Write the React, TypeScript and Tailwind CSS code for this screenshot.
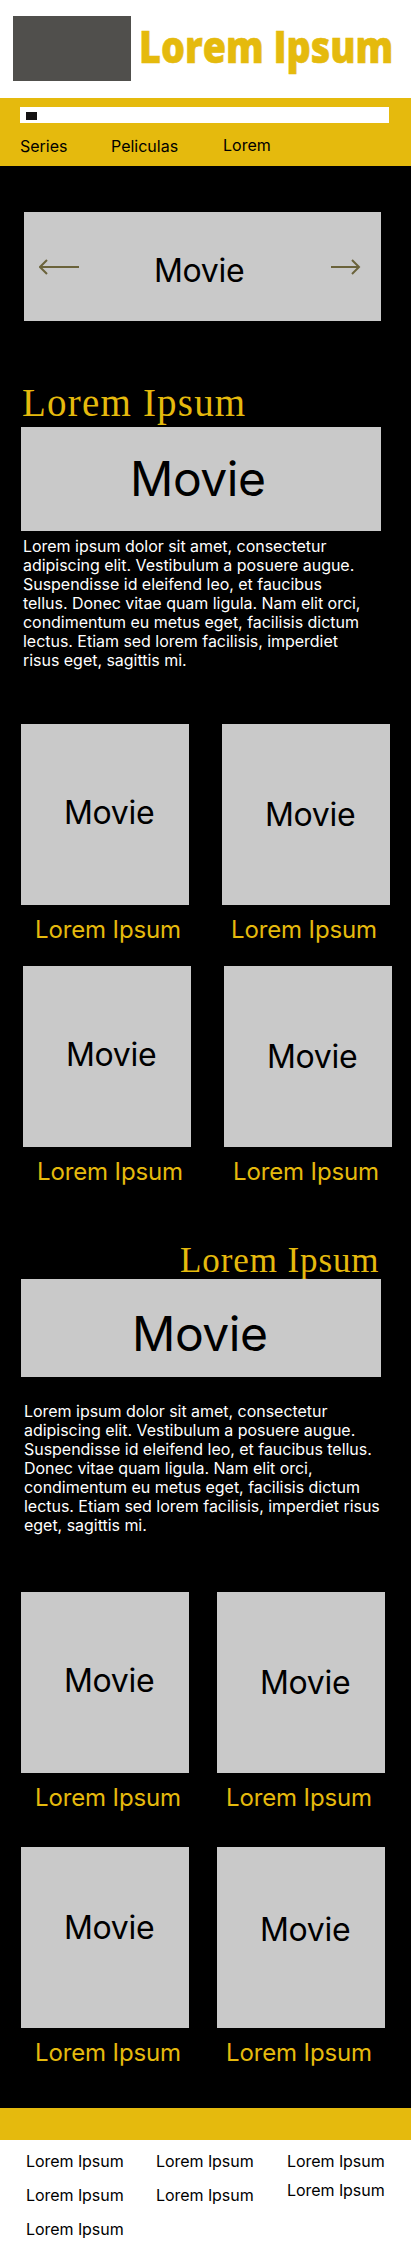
type CardProps = { labelClass: string; captionClass: string };

function Card({ labelClass, captionClass }: CardProps) {
  return (
    <article className="w-[168px]">
      <div className={`h-[181px] bg-[#c9c9c9] text-[32px] leading-[39px] tracking-[-0.3px] text-black ${labelClass}`}>Movie</div>
      <h3 className={`mt-[10px] whitespace-nowrap text-2xl leading-[29px] tracking-[-0.13px] text-[#e5ba0d] ${captionClass}`}>Lorem Ipsum</h3>
    </article>
  );
}

function CardRow({ className, low = true }: { className: string; low?: boolean }) {
  return (
    <div className={`flex h-[220px] ${className}`}>
      <Card labelClass={low ? "pl-[43px] pt-[69px]" : "pl-[43px] pt-[61px]"} captionClass="pl-[14px]" />
      <Card labelClass={low ? "pl-[43px] pt-[71px]" : "pl-[43px] pt-[63px]"} captionClass="pl-[9px]" />
    </div>
  );
}

function Header() {
  return (
    <header>
      <div className="flex h-[98px] bg-white pl-[13px] pt-4">
        <div className="h-[65px] w-[118px] shrink-0 bg-[#504f4c]" />
        <h1 className="ml-2 h-[60px] origin-left scale-x-[0.857] whitespace-nowrap font-['Open_Sans',sans-serif] text-[44px] font-extrabold leading-[60px] text-[#e5ba0d] [-webkit-text-stroke:0.6px_#e5ba0d]">
          Lorem Ipsum
        </h1>
      </div>
      <div className="h-[68px] bg-[#e5ba0d] px-5 pt-[9px]">
        <div className="h-4 w-[369px] bg-white pl-[6px] pt-[5px]">
          <div className="h-2 w-[11px] bg-[#141212]" />
        </div>
        <nav className="flex pt-[13px] text-base leading-[19px] text-black">
          <a className="mt-px w-[91px]">Series</a>
          <a className="mt-px w-[112px]">Peliculas</a>
          <a>Lorem</a>
        </nav>
      </div>
    </header>
  );
}

function Hero() {
  return (
    <section className="ml-6 mt-[46px] flex h-[109px] w-[357px] bg-[#c9c9c9]">
      <svg className="ml-[15px] mt-[47px] h-4 w-10" viewBox="0 0 40 16" fill="none" stroke="#6b633b" strokeWidth="2">
        <path d="M40 8H1M8 1L1 8l7 7" />
      </svg>
      <p className="ml-[75px] mt-[39px] w-[177px] text-[32px] leading-[39px] tracking-[-0.3px] text-black">Movie</p>
      <svg className="mt-[47px] h-4 w-[30px]" viewBox="0 0 30 16" fill="none" stroke="#6b633b" strokeWidth="2">
        <path d="M0 8h28M21 1l7 7-7 7" />
      </svg>
    </section>
  );
}

function Footer() {
  return (
    <footer className="h-[144px] bg-white">
      <div className="h-8 bg-[#e5ba0d]" />
      <div className="flex pl-[26px] pt-3 text-base leading-[19px] tracking-[-0.06px] text-black">
        <ul className="flex w-[130px] flex-col gap-[15px]">
          <li>Lorem Ipsum</li>
          <li>Lorem Ipsum</li>
          <li>Lorem Ipsum</li>
        </ul>
        <ul className="flex w-[131px] flex-col gap-[15px]">
          <li>Lorem Ipsum</li>
          <li>Lorem Ipsum</li>
        </ul>
        <ul className="flex flex-col gap-[10px]">
          <li>Lorem Ipsum</li>
          <li>Lorem Ipsum</li>
        </ul>
      </div>
    </footer>
  );
}

export default function App() {
  return (
    <div className="flex h-[2252px] w-[411px] flex-col overflow-hidden bg-black font-['Inter',sans-serif]">
      <Header />
      <main className="h-[1942px]">
        <Hero />

        <section>
          <h2 className="ml-[22px] mt-[60px] h-[46px] whitespace-nowrap font-['Liberation_Serif',serif] text-[39px] leading-[44px] tracking-[1.2px] text-[#e5ba0d]">
            Lorem Ipsum
          </h2>
          <div className="ml-[21px] h-[104px] w-[360px] bg-[#c9c9c9] pl-[109px] pt-[23px] text-[48px] leading-[58px] tracking-[-0.45px] text-black">
            Movie
          </div>
          <p className="ml-[23px] mt-[6px] h-[187px] w-[344px] text-base leading-[19px] tracking-[-0.03px] text-white">
            Lorem ipsum dolor sit amet, consectetur adipiscing elit. Vestibulum a posuere augue. Suspendisse id eleifend
            leo, et faucibus tellus. Donec vitae quam ligula. Nam elit orci, condimentum eu metus eget, facilisis dictum
            lectus. Etiam sed lorem facilisis, imperdiet risus eget, sagittis mi.
          </p>
          <CardRow className="ml-[21px] gap-[33px]" />
          <CardRow className="ml-[23px] mt-[22px] gap-[33px]" />
        </section>

        <section>
          <h2 className="ml-[180px] mt-[55px] h-[38px] whitespace-nowrap font-['Liberation_Serif',serif] text-[35px] leading-10 tracking-[0.9px] text-[#e5ba0d]">
            Lorem Ipsum
          </h2>
          <div className="relative ml-[21px] h-[98px] w-[360px] bg-[#c9c9c9] pl-[111px] pt-[26px] text-[48px] leading-[58px] tracking-[-0.45px] text-black">
            Movie
          </div>
          <p className="ml-6 mt-[25px] h-[190px] w-[358px] text-base leading-[19px] tracking-[-0.03px] text-white">
            Lorem ipsum dolor sit amet, consectetur adipiscing elit. Vestibulum a posuere augue. Suspendisse id eleifend
            leo, et faucibus tellus. Donec vitae quam ligula. Nam elit orci, condimentum eu metus eget, facilisis dictum
            lectus. Etiam sed lorem facilisis, imperdiet risus eget, sagittis mi.
          </p>
          <CardRow className="ml-[21px] gap-[28px]" />
          <CardRow className="ml-[21px] mt-[35px] gap-[28px]" low={false} />
        </section>
      </main>
      <Footer />
    </div>
  );
}
